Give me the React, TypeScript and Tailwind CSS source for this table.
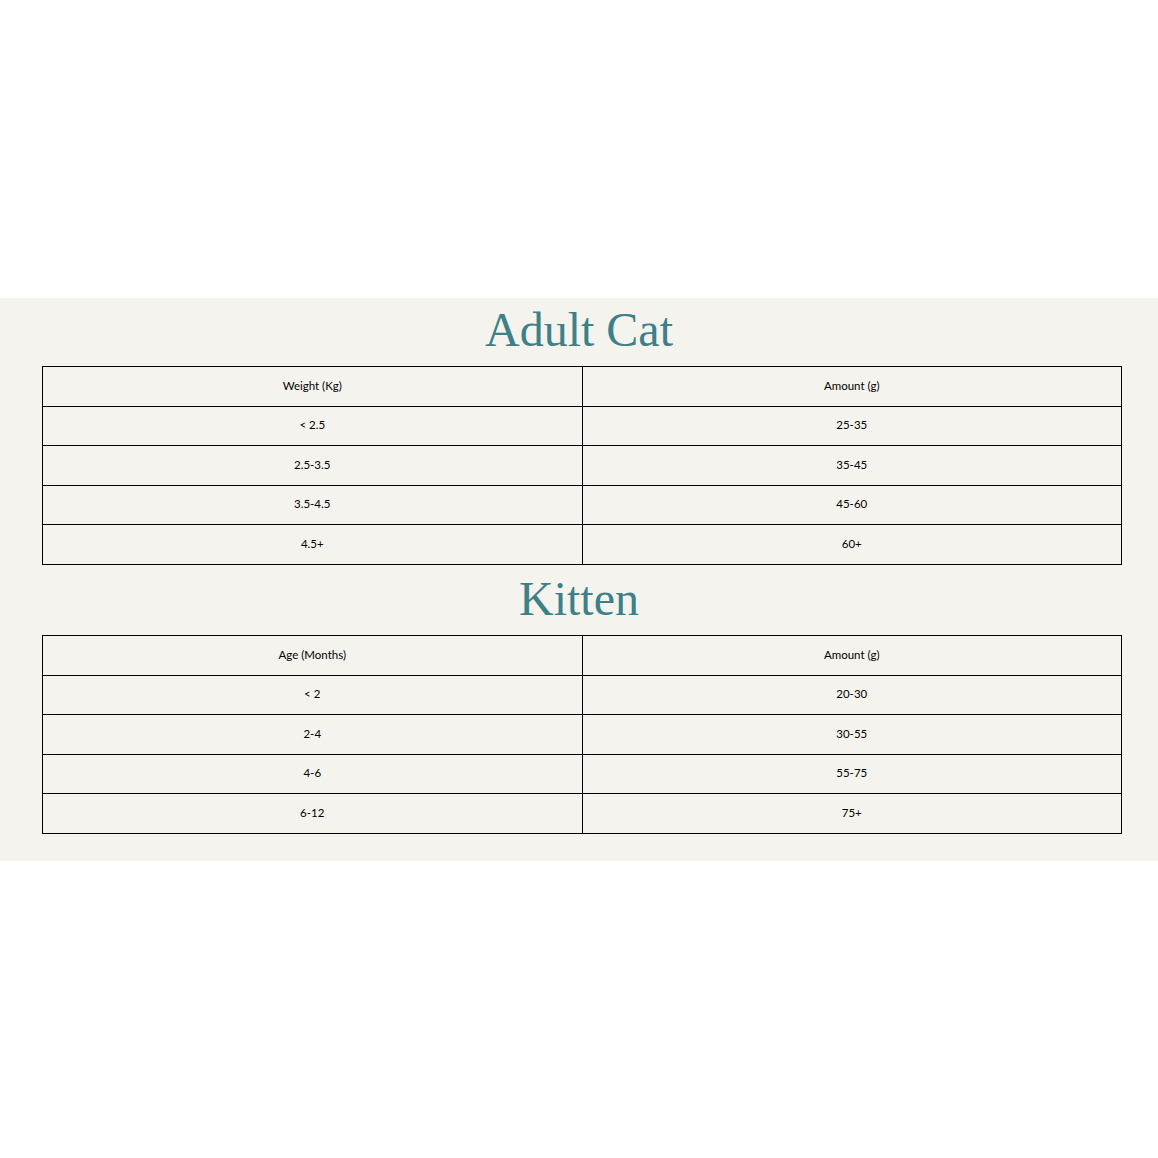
import React from 'react';

type Row = [string, string];

const adult: Row[] = [
	['< 2.5', '25-35'],
	['2.5-3.5', '35-45'],
	['3.5-4.5', '45-60'],
	['4.5+', '60+'],
];

const kitten: Row[] = [
	['< 2', '20-30'],
	['2-4', '30-55'],
	['4-6', '55-75'],
	['6-12', '75+'],
];

function FeedingTable({ head, rows }: { head: Row; rows: Row[] }) {
	return (
		<table className="ml-[42px] w-[1080px] border-collapse table-fixed text-[11.5px] text-black">
			<tbody>
				{[head, ...rows].map((r, i) => (
					<tr key={i} className="h-[39.6px]">
						<td className="border border-black text-center align-middle pb-[2px]">{r[0]}</td>
						<td className="border border-black text-center align-middle pb-[2px]">{r[1]}</td>
					</tr>
				))}
			</tbody>
		</table>
	);
}

export default function App() {
	return (
		<div className="min-h-[1158px] bg-white [font-family:Lato,'Open_Sans',sans-serif]">
			<div className="h-[298px]" />
			<section className="bg-[#f5f3ee] pb-[27px]">
				<h2 className="text-center text-[48px] leading-[64px] h-[68px] text-[#3d8087] [font-family:'Liberation_Serif',serif]">
					Adult Cat
				</h2>
				<FeedingTable head={['Weight (Kg)', 'Amount (g)']} rows={adult} />
				<h2 className="text-center text-[48px] leading-[68px] h-[70px] text-[#3d8087] [font-family:'Liberation_Serif',serif]">
					Kitten
				</h2>
				<FeedingTable head={['Age (Months)', 'Amount (g)']} rows={kitten} />
			</section>
		</div>
	);
}
